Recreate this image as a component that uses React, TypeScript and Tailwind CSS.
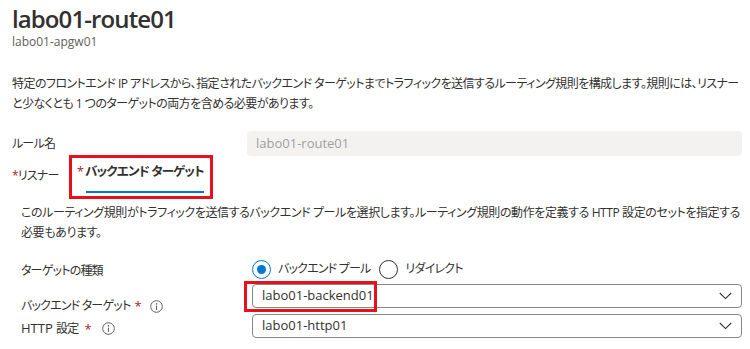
import * as React from 'react';

const font = "font-['Open_Sans','Noto_Sans_CJK_JP',sans-serif] [font-feature-settings:'palt']";
const jp = 'text-[12px] tracking-[-0.8px]';

const InfoIcon: React.FC = () => (
  <svg width="13" height="13" viewBox="0 0 13 13" className="shrink-0">
    <circle cx="6.5" cy="6.5" r="5.8" fill="none" stroke="#605e5c" strokeWidth="1" />
    <circle cx="6.5" cy="3.9" r="0.8" fill="#605e5c" />
    <path d="M6.5 5.6 V9.8" stroke="#605e5c" strokeWidth="1.1" />
  </svg>
);

const Chevron: React.FC = () => (
  <svg width="13" height="8" viewBox="0 0 13 8">
    <path d="M0.8 1 L6.5 6.6 L12.2 1" fill="none" stroke="#323130" strokeWidth="1.1" />
  </svg>
);

const Radio: React.FC<{ checked?: boolean; label: string }> = ({ checked, label }) => (
  <div className="flex items-center">
    <span
      className={`flex h-[19px] w-[19px] items-center justify-center rounded-full border ${
        checked ? 'border-[#0078d4]' : 'border-[#323130]'
      }`}
    >
      {checked && <span className="h-[9px] w-[9px] rounded-full bg-[#0078d4]" />}
    </span>
    <span className={`ml-[7px] ${jp}`}>{label}</span>
  </div>
);

const Dropdown: React.FC<{ value: string }> = ({ value }) => (
  <div className="flex h-[24px] flex-1 items-center justify-between rounded-sm border border-[#8a8886] bg-white pl-[9px] pr-[9px] text-[13px]">
    <span>{value}</span>
    <Chevron />
  </div>
);

export default function App() {
  return (
    <div className={`h-[349px] w-[750px] overflow-hidden bg-white pl-3 pr-2 text-[#323130] ${font}`}>
      <h1 className="pt-[3px] text-[24px] font-semibold leading-[31px] tracking-[-0.9px]">labo01-route01</h1>
      <div className="text-[12px] leading-[16px] text-[#605e5c]">labo01-apgw01</div>

      <p className="mt-[24px] whitespace-nowrap text-[12px] leading-[20px] tracking-[-0.55px]">
        特定のフロントエンド IP アドレスから、指定されたバックエンド ターゲットまでトラフィックを送信するルーティング規則を構成します。規則には、リスナー
        <br />
        と少なくとも 1 つのターゲットの両方を含める必要があります。
      </p>

      <div className="mt-[17px] flex h-[25px] items-center text-[13px]">
        <div className={`w-[235px] ${jp}`}>ルール名</div>
        <div className="flex h-full flex-1 items-center rounded-sm bg-[#f3f2f1] px-[9px] text-[#a19f9d]">
          labo01-route01
        </div>
      </div>

      <div className="-mt-px flex h-[44px] items-center">
        <div className={`mt-[-3px] w-[57px] whitespace-nowrap ${jp}`}>
          <span className="text-[#a4262c]">*</span>リスナー
        </div>
        <div className="h-[44px] w-[144px] border-[3px] border-[#e8111b] pl-[5px] pt-[4px]">
          <div className="flex flex-col items-start">
            <div className="whitespace-nowrap text-[12.5px] leading-[20px] tracking-[-0.8px]">
              <span className="text-[#a4262c]">*</span>
              <span className="ml-[2px] font-semibold">バックエンド ターゲット</span>
            </div>
            <div className="ml-[9px] mt-[9px] h-[2px] w-[118px] bg-[#0078d4]" />
          </div>
        </div>
      </div>

      <div className="pl-[9px]">
        <p className="mt-[4px] whitespace-nowrap text-[12px] leading-[20px] tracking-[-0.4px]">
          このルーティング規則がトラフィックを送信するバックエンド プールを選択します。ルーティング規則の動作を定義する HTTP 設定のセットを指定する
          <br />
          必要もあります。
        </p>

        <div className="mt-[16px] flex h-[20px] items-center">
          <div className={`w-[231px] pt-[4px] ${jp}`}>ターゲットの種類</div>
          <div className="flex items-center gap-[9px]">
            <Radio checked label="バックエンド プール" />
            <Radio label="リダイレクト" />
          </div>
        </div>

        <div className="mt-[5px] flex h-[24px] items-start">
          <div className="flex w-[231px] items-center pt-[12px] leading-[20px]">
            <span className={jp}>バックエンド ターゲット</span>
            <span className="ml-[4px] text-[13px] text-[#a4262c]">*</span>
            <span className="ml-[8px]">
              <InfoIcon />
            </span>
          </div>
          <div className="relative flex flex-1">
            <Dropdown value="labo01-backend01" />
            <div className="pointer-events-none absolute left-[-8px] top-[-3px] h-[31px] w-[133px] border-[3px] border-[#e8111b]" />
          </div>
        </div>

        <div className="mt-[6px] flex h-[24px] items-start">
          <div className="flex w-[231px] items-center pt-[4px] leading-[20px]">
            <span className="text-[13px]">
              HTTP <span className={jp}>設定</span>
            </span>
            <span className="ml-[6px] text-[13px] text-[#a4262c]">*</span>
            <span className="ml-[10px]">
              <InfoIcon />
            </span>
          </div>
          <div className="flex flex-1">
            <Dropdown value="labo01-http01" />
          </div>
        </div>
      </div>
    </div>
  );
}
